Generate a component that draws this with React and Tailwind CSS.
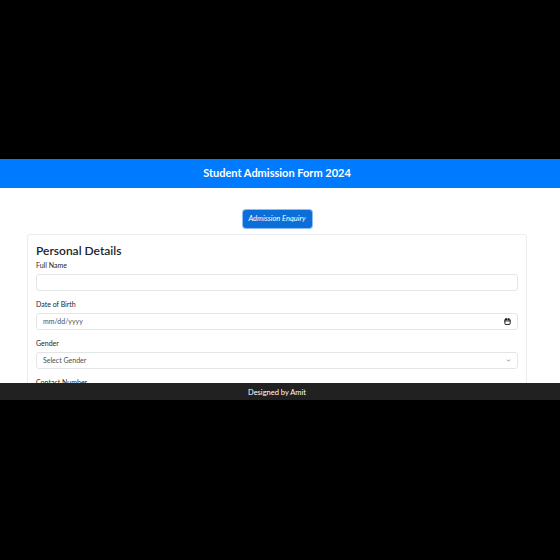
import { Calendar, ChevronDown } from 'lucide-react';

const fields = [
  { label: 'Full Name', kind: 'text' },
  { label: 'Date of Birth', kind: 'date' },
  { label: 'Gender', kind: 'select' },
  { label: 'Contact Number', kind: 'text' },
];

const Field = ({ label, kind }) => (
  <div className="mb-[8px]">
    <p className="mb-[4px] h-[10px] text-[7px] leading-[10px] text-[#212529]">{label}</p>
    <div className="flex h-[17px] items-center justify-between rounded-[3px] border border-[#e3e6e9] px-[6px] text-[7px] text-[#495057]">
      {kind === 'date' && (
        <>
          <span>mm/dd/yyyy</span>
          <Calendar className="h-[7px] w-[7px] text-black" strokeWidth={3} />
        </>
      )}
      {kind === 'select' && (
        <>
          <span>Select Gender</span>
          <ChevronDown className="h-[5px] w-[5px] text-[#555]" strokeWidth={3} />
        </>
      )}
    </div>
  </div>
);

export default function App() {
  return (
    <div className="h-[560px] bg-black pt-[159px] font-['Lato','Noto_Sans',sans-serif]">
      <div className="flex h-[241px] flex-col bg-white">
        <header className="flex h-[29px] shrink-0 items-center justify-center bg-[#007bff] pr-[6px]">
          <h1 className="text-[11px] font-bold text-white">Student Admission Form 2024</h1>
        </header>

        <main className="flex-1 overflow-hidden pl-[27px] pr-[33px] pt-[22px]">
          <div className="flex justify-center">
            <button
              type="button"
              className="h-[18px] w-[69px] rounded-[3px] bg-[#0b6ed9] text-[7.5px] italic text-white ring-1 ring-[#8fbdf7]"
            >
              Admission Enquiry
            </button>
          </div>

          <section className="mt-[6px] rounded-[3px] border border-[#ececec] px-[8px] pt-[8px]">
            <h2 className="mb-[2px] text-[12px] font-semibold leading-[15px] text-[#212529]">Personal Details</h2>
            {fields.map((field) => (
              <Field key={field.label} {...field} />
            ))}
          </section>
        </main>

        <footer className="flex h-[17px] shrink-0 items-center justify-center bg-[#212121] pr-[6px] pt-[3px] text-[7.5px] text-white">
          Designed by Amit
        </footer>
      </div>
    </div>
  );
}
